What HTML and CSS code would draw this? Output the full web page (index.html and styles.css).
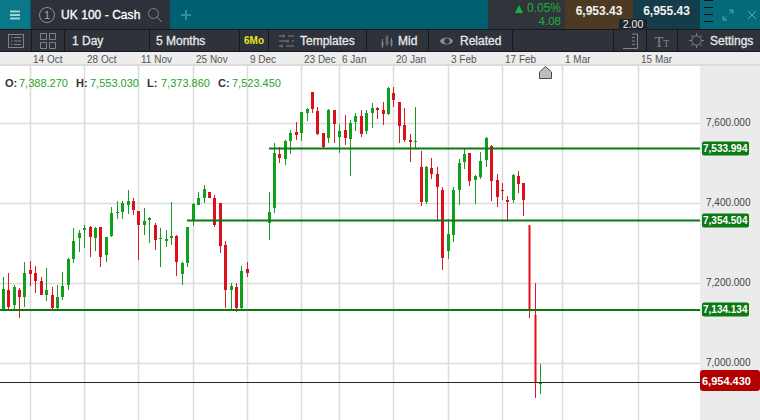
FILE: index.html
```html
<!DOCTYPE html>
<html lang="en">
<head>
<meta charset="utf-8">
<title>UK 100 - Cash chart</title>
<link rel="stylesheet" href="styles.css">
</head>
<body>
<div class="app">
  <header class="topbar">
    <button class="menu" aria-label="Menu">
      <svg width="12" height="12" viewBox="0 0 12 12"><path class="menu-lines" d="M1 2.500H11M1 6H11M1 9.500H11"/></svg>
    </button>
    <div class="tab">
      <span class="tab-num">1</span>
      <span class="tab-name">UK 100 - Cash</span>
      <svg class="tab-search" width="16" height="16" viewBox="0 0 16 16"><circle class="ico" cx="6.500" cy="6.500" r="5"/><path class="ico" d="M10.200 10.200L15 15"/></svg>
    </div>
    <svg class="plus" width="12" height="12" viewBox="0 0 12 12"><path class="plus-lines" d="M6 1V11M1 6H11"/></svg>
    <div class="top-gap"></div>
    <div class="change">
      <div class="change-pct"><span class="arrow"></span>0.05%</div>
      <div class="change-abs">4.08</div>
    </div>
    <div class="price bid">6,953.43</div>
    <div class="price ask">6,955.43</div>
    <div class="win">
      <div class="grip"><i></i><i></i><i></i><i></i></div>
      <svg class="win-expand" width="12" height="12" viewBox="0 0 12 12"><path class="win-ico" d="M7 1H11V5M11 1L7.500 4.500M5 11H1V7M1 11L4.500 7.500"/></svg>
      <svg class="win-close" width="10" height="10" viewBox="0 0 10 10"><path class="win-ico" d="M1 1L9 9M9 1L1 9"/></svg>
    </div>
    <div class="spread">2.00</div>
  </header>

  <nav class="toolbar">
    <div class="cell w-list"><svg width="16" height="14" viewBox="0 0 16 14"><rect class="tool" x=".5" y=".5" width="15" height="13"/><path class="tool" d="M3 3.500H4.500M6 3.500H13M3 7H4.500M6 7H13M3 10.500H4.500M6 10.500H13"/></svg></div>
    <div class="cell w-layout"><svg width="16" height="16" viewBox="0 0 16 16"><path class="tool" d="M.5 .5H6.500V6.500H.5ZM9.500 .5H15.500V6.500H9.500ZM.5 9.500H6.500V15.500H.5ZM9.500 9.500H15.500V15.500H9.500Z"/></svg></div>
    <div class="cell w-day label">1 Day</div>
    <div class="cell w-months label">5 Months</div>
    <div class="cell w-six six">6Mo</div>
    <div class="cell w-templates label">
      <svg width="15" height="14" viewBox="0 0 15 14"><path class="tool" d="M0 2H5M9 2H15M5 .5V3.500M0 7H9M13 7H15M9 5.500V8.500M0 12H3M7 12H15M3 10.500V13.500"/></svg>
      <span>Templates</span>
    </div>
    <div class="cell w-mid label">
      <svg width="14" height="14" viewBox="0 0 14 14"><path class="tool" d="M2.500 5V14M7 1V12M11.500 4V13"/><path class="tool-fill" d="M1 8H4V12H1ZM5.500 3H8.500V10H5.500ZM10 6H13V11H10Z"/></svg>
      <span>Mid</span>
    </div>
    <div class="cell w-related label">
      <svg width="15" height="12" viewBox="0 0 16 12"><path class="eye" d="M1 6C3 1 13 1 15 6C13 11 3 11 1 6Z"/><circle class="eye-hole" cx="8.500" cy="6" r="3"/></svg>
      <span>Related</span>
    </div>
    <div class="cell w-empty"></div>
    <div class="cell w-scale"><svg width="16" height="16" viewBox="0 0 16 16"><path class="tool" d="M1 15.500H15.500V1H10M10 4.500H13M10 8H13M10 11.500H13"/></svg></div>
    <div class="cell w-text"><span class="tt-big">T</span><span class="tt-small">T</span></div>
    <div class="cell w-settings label">
      <svg width="15" height="15" viewBox="0 0 16 16"><circle class="tool" cx="8" cy="8" r="5"/><path class="tool" d="M8 0V3M8 13V16M0 8H3M13 8H16M2.300 2.300L4.500 4.500M11.500 11.500L13.700 13.700M13.700 2.300L11.500 4.500M4.500 11.500L2.300 13.700"/></svg>
      <span>Settings</span>
    </div>
  </nav>

  <div class="dates">
    <svg width="760" height="14" viewBox="0 52 760 14">
      <g class="date">
        <text x="33" y="63">14 Oct</text><text x="87" y="63">28 Oct</text><text x="141" y="63">11 Nov</text>
        <text x="196" y="63">25 Nov</text><text x="250" y="63">9 Dec</text><text x="304" y="63">23 Dec</text>
        <text x="342" y="63">6 Jan</text><text x="396" y="63">20 Jan</text><text x="451" y="63">3 Feb</text>
        <text x="505" y="63">17 Feb</text><text x="565" y="63">1 Mar</text><text x="641" y="63">15 Mar</text>
      </g>
    </svg>
  </div>

  <main class="chart">
    <svg class="plot" width="760" height="354" viewBox="0 66 760 354">
      <rect class="axis-bg" x="700" y="66" width="60" height="354"/>
      <path class="grid" d="M30.500 66V420M84.500 66V420M138.500 66V420M193.500 66V420M247.500 66V420M301.500 66V420M339.500 66V420M393.500 66V420M448.500 66V420M502.500 66V420M562.500 66V420M638.500 66V420M0 123.500H700M0 203.500H700M0 283.500H700M0 363.500H700"/>
      <path class="wick up" d="M3.500 277V310M14.500 285V310M24.500 262V307M46.500 268V301M57.500 285V309M62.500 272V300M68.500 258V290M73.500 228V263M79.500 230V252M84.500 225V248M95.500 227V251M106.500 237V262M111.500 207V237M117.500 201V219M122.500 201V219M128.500 190V214M144.500 208V235M149.500 217V243M160.500 228V267M166.500 230V247M171.500 202V245M182.500 262V285M187.500 227V267M193.500 203V226M198.500 192V205M204.500 185V203M231.500 283V310M241.500 266V310M269.500 192V240M274.500 143V213M285.500 140V165M290.500 130V154M301.500 112V141M307.500 108V121M328.500 109V143M339.500 124V153M350.500 120V176M355.500 113V131M366.500 110V134M372.500 103V128M388.500 87V115M415.500 107V148M426.500 166V204M448.500 219V259M453.500 187V242M459.500 159V205M464.500 149V169M475.500 175V204M480.500 152V179M486.500 137V167M513.500 174V203M540.500 364V394"/>
      <path class="body up" d="M3.500 289V310M14.500 287V305M24.500 273V297M46.500 290V295M57.500 297V308M62.500 286V297M68.500 259V285M73.500 241V259M79.500 233V238M84.500 228V230M95.500 228V238M106.500 237V255M111.500 213V236M117.500 212V213M122.500 203V212M128.500 201V205M144.500 221V225M149.500 218V220M160.500 238V239M166.500 239V241M171.500 236V238M182.500 263V274M187.500 227V263M193.500 204V221M198.500 198V205M204.500 189V198M231.500 286V290M241.500 271V308M269.500 212V223M274.500 153V208M285.500 141V159M290.500 133V141M301.500 112V133M307.500 109V113M328.500 110V138M339.500 131V137M350.500 123V139M355.500 116V122M366.500 113V131M372.500 108V113M388.500 88V114M415.500 141V142M426.500 167V202M448.500 234V251M453.500 190V235M459.500 163V190M464.500 154V162M475.500 176V180M480.500 161V177M486.500 138V160M513.500 175V200M540.500 382V384"/>
      <path class="wick down" d="M8.500 273V310M19.500 288V318M30.500 261V286M35.500 266V293M41.500 277V295M52.500 287V310M90.500 226V257M100.500 227V267M133.500 198V215M138.500 211V260M155.500 223V250M176.500 235V276M209.500 192V198M214.500 195V227M220.500 203V253M225.500 241V308M236.500 283V312M247.500 262V277M279.500 147V163M296.500 122V140M312.500 92V113M317.500 107V135M323.500 133V148M334.500 110V143M345.500 115V145M361.500 110V137M377.500 107V119M383.500 102V125M393.500 87V107M399.500 102V143M404.500 108V142M410.500 134V162M421.500 151V206M431.500 158V179M437.500 167V220M442.500 187V270M469.500 153V186M491.500 145V201M497.500 174V207M502.500 183V200M507.500 196V220M518.500 171V193M523.500 183V216M529.500 225V318M535.500 283V398"/>
      <path class="body down" d="M8.500 290V307M19.500 290V297M30.500 270V274M35.500 273V281M41.500 281V295M52.500 295V308M90.500 227V237M100.500 227V257M133.500 201V210M138.500 211V225M155.500 225V240M176.500 236V262M209.500 192V198M214.500 198V225M220.500 203V246M225.500 245V290M236.500 287V308M247.500 269V273M279.500 154V158M296.500 132V135M312.500 92V109M317.500 111V134M323.500 133V147M334.500 110V124M345.500 130V138M361.500 116V134M377.500 108V110M383.500 110V114M393.500 93V100M399.500 102V126M404.500 125V140M410.500 140V142M421.500 167V202M431.500 168V174M437.500 174V187M442.500 190V258M469.500 153V181M491.500 146V181M497.500 180V197M502.500 190V191M507.500 200V202M518.500 176V184M523.500 183V200"/>
      <path class="body-thin down" d="M529.500 225V310M535.500 315V383"/>
      <path class="level" d="M269 148.500H700M187 220.500H700M0 310H700"/>
      <path class="last" d="M0 382.500H700"/>
      <path class="flag" d="M545.500 66.500L551.500 72V78.500H539.500V72Z"/>
      <g class="tick">
        <text x="706" y="126">7,600.000</text><text x="706" y="206">7,400.000</text>
        <text x="706" y="286">7,200.000</text><text x="706" y="366">7,000.000</text>
      </g>
      <rect class="badge-g" x="702" y="141.500" width="47" height="14" rx="2"/>
      <rect class="badge-g" x="702" y="213.500" width="47" height="14" rx="2"/>
      <rect class="badge-g" x="702" y="302.500" width="47" height="14" rx="2"/>
      <rect class="badge-r" x="700" y="370" width="60" height="21" rx="3"/>
      <g class="badge-text">
        <text x="703" y="152">7,533.994</text><text x="703" y="224">7,354.504</text><text x="703" y="313">7,134.134</text>
      </g>
      <text class="last-text" x="702" y="385">6,954.430</text>
    </svg>
    <div class="ohlc">
      <span class="k">O:</span><span class="v">7,388.270</span>
      <span class="k">H:</span><span class="v">7,553.030</span>
      <span class="k">L:</span><span class="v">7,373.860</span>
      <span class="k">C:</span><span class="v">7,523.450</span>
    </div>
  </main>
</div>
</body>
</html>
```
FILE: styles.css
```css
* { box-sizing: border-box; }
html, body { margin: 0; padding: 0; }
body { width: 760px; height: 420px; overflow: hidden; background: #fff; font-family: "Liberation Sans", Arial, sans-serif; }
.app { position: relative; width: 760px; height: 420px; display: flex; flex-direction: column; }

.topbar { position: relative; height: 30px; display: flex; align-items: stretch; background: #005f70; border-bottom: 1px solid #15181d; }
.menu { width: 30px; border: 0; padding: 0; display: flex; align-items: center; justify-content: center; background: #0a7888; }
.menu-lines { fill: none; stroke: #9fd6dc; stroke-width: 2; }
.tab { width: 139px; margin-left: 1px; display: flex; align-items: center; background: #2d3139; color: #fff; }
.tab-num { width: 16px; height: 16px; margin-left: 8px; border: 1px solid #8d9298; border-radius: 50%; color: #a4a8ad; font-size: 11px; line-height: 14px; text-align: center; }
.tab-name { margin-left: 6px; font-size: 12px; white-space: nowrap; letter-spacing: .05px; -webkit-text-stroke: .3px #fff; }
.tab-search { margin-left: 7px; }
.ico { fill: none; stroke: #80858c; stroke-width: 1; }
.plus { align-self: center; margin-left: 10px; }
.plus-lines { fill: none; stroke: #3a8e9c; stroke-width: 2; }
.top-gap { flex: 1; }
.change { width: 77px; padding: 2px 4px 0 0; background: #30343b; text-align: right; font-size: 12px; line-height: 13px; color: #16b43a; }
.change-pct { display: flex; justify-content: flex-end; align-items: center; }
.arrow { width: 0; height: 0; margin-right: 4px; border-left: 4px solid transparent; border-right: 4px solid transparent; border-bottom: 8px solid #16b43a; }
.change-abs { font-size: 11.500px; }
.price { display: flex; align-items: flex-start; padding-top: 4px; justify-content: center; font-size: 12px; font-weight: bold; color: #f2f2f2; }
.bid { width: 68px; background: #4c3a22; }
.ask { width: 67px; background: #143c4a; }
.win { width: 60px; display: flex; align-items: center; padding-left: 4px; background: #05697a; }
.grip { width: 9px; align-self: flex-start; display: flex; flex-direction: column; gap: 6px; }
.grip i { display: block; height: 1px; background: #0b0f12; }
.win-expand { margin-left: 9px; }
.win-close { margin-left: 13px; }
.win-ico { fill: none; stroke: #4fb0bf; stroke-width: 1; }
.spread { position: absolute; left: 619px; top: 19px; width: 28px; height: 11px; background: #20252c; color: #f0f0f0; font-size: 10.500px; line-height: 11px; text-align: center; }

.toolbar { height: 22px; display: flex; background: #2e323a; border-bottom: 1px solid #15181d; }
.cell { display: flex; align-items: center; border-right: 1px solid #15181d; flex: none; }
.label { color: #e8e8e8; font-size: 12px; white-space: nowrap; -webkit-text-stroke: .3px #e8e8e8; }
.w-list { width: 32px; justify-content: center; }
.w-layout { width: 33px; justify-content: center; }
.w-day { width: 85px; padding-left: 7px; }
.w-months { width: 90px; padding-left: 6px; }
.w-six { width: 29px; justify-content: center; color: #e6e619; font-size: 10px; font-weight: bold; }
.w-templates { width: 98px; padding-left: 10px; gap: 6px; }
.w-mid { width: 62px; padding-left: 13px; gap: 4px; }
.w-related { width: 84px; padding-left: 10px; gap: 6px; }
.w-empty { width: 101px; }
.w-scale { width: 33px; justify-content: center; }
.w-text { width: 31px; justify-content: center; align-items: baseline; padding-top: 5px; color: #83878c; font-family: "Liberation Serif", serif; }
.tt-big { font-size: 14px; }
.tt-small { font-size: 10px; }
.w-settings { flex: 1; border-right: 0; padding-left: 11px; gap: 6px; }
.tool { fill: none; stroke: #7f848a; stroke-width: 1; }
.tool-fill { fill: #7f848a; opacity: .45; }
.eye { fill: #8f9398; }
.eye-hole { fill: #2e323a; }

.dates { height: 14px; background: #ededed; border-bottom: 2px solid #dcdcdc; }
.dates svg { display: block; }
.date text { fill: #555; font-size: 10px; }

.chart { position: relative; flex: 1; }
.plot { display: block; }
.axis-bg { fill: #ebebeb; }
.grid { fill: none; stroke: #dcdcdc; stroke-width: 1.500; }
.wick { fill: none; stroke-width: 1; }
.wick.up { stroke: #1c9a26; }
.wick.down { stroke: #d81c28; }
.body { fill: none; stroke-width: 3; }
.body.up { stroke: #10a01c; }
.body.down { stroke: #dc0f1c; }
.body-thin { fill: none; stroke: #e60f1c; stroke-width: 2; }
.level { fill: none; stroke: #0b7a12; stroke-width: 2; }
.last { fill: none; stroke: #262626; stroke-width: 1; }
.flag { fill: #bdbdbd; stroke: #4a4a4a; stroke-width: 1; }
.tick text { fill: #444; font-size: 10px; }
.badge-g { fill: #0b7a12; }
.badge-r { fill: #b00000; }
.badge-text text { fill: #fff; font-size: 10px; font-weight: bold; }
.last-text { fill: #fff; font-size: 11px; font-weight: bold; }

.ohlc { position: absolute; left: 5px; top: 11px; display: flex; font-size: 11px; line-height: 13px; }
.k { width: 14px; color: #333; font-weight: bold; }
.v { width: 57px; color: #27a327; }
```
